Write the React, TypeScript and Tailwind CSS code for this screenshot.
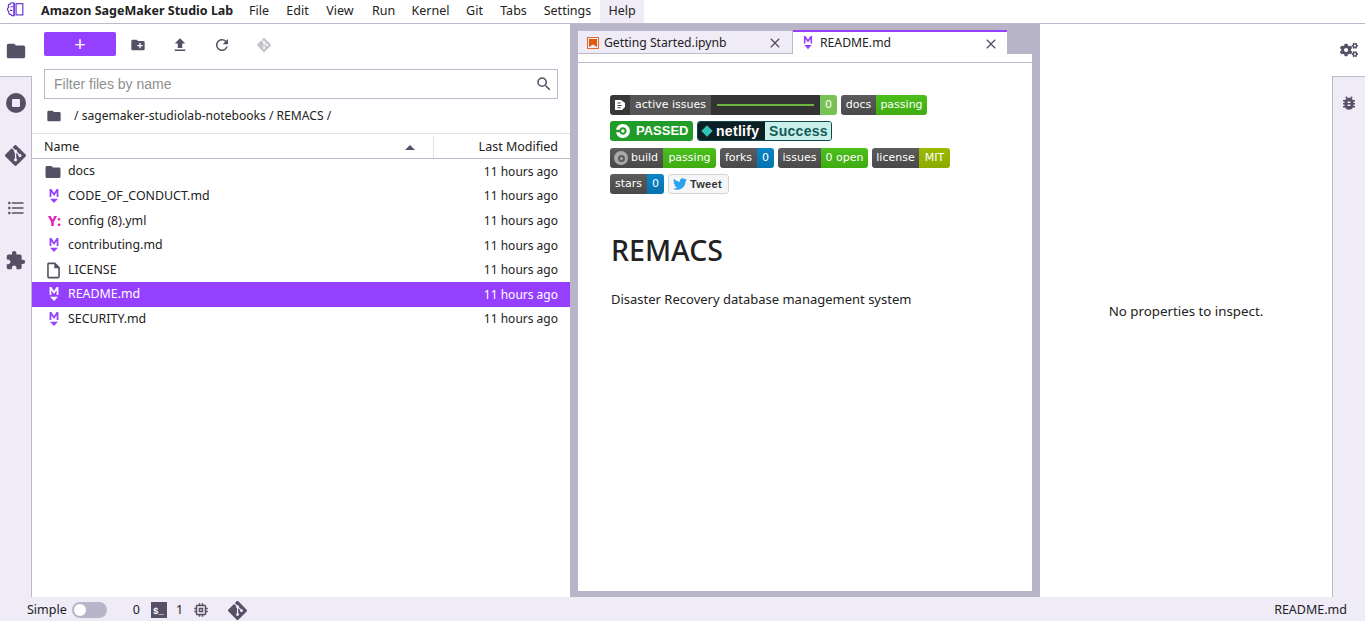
import { FaCogs, FaTwitter } from 'react-icons/fa';
import {
  MdBugReport,
  MdClose,
  MdCreateNewFolder,
  MdExtension,
  MdFileUpload,
  MdFolder,
  MdFormatListBulleted,
  MdMemory,
  MdOutlineInsertDriveFile,
  MdRefresh,
  MdSearch,
} from 'react-icons/md';
import { SiCircleci, SiGit } from 'react-icons/si';

const menus = [
  { label: 'File', width: 'w-[38px]' },
  { label: 'Edit', width: 'w-[39px]' },
  { label: 'View', width: 'w-[46px]' },
  { label: 'Run', width: 'w-[41px]' },
  { label: 'Kernel', width: 'w-[53px]' },
  { label: 'Git', width: 'w-[35px]' },
  { label: 'Tabs', width: 'w-[43px]' },
  { label: 'Settings', width: 'w-[65px]' },
  { label: 'Help', width: 'w-[44px]' },
];

type FileKind = 'folder' | 'md' | 'yml' | 'file';

const files: { name: string; kind: FileKind }[] = [
  { name: 'docs', kind: 'folder' },
  { name: 'CODE_OF_CONDUCT.md', kind: 'md' },
  { name: 'config (8).yml', kind: 'yml' },
  { name: 'contributing.md', kind: 'md' },
  { name: 'LICENSE', kind: 'file' },
  { name: 'README.md', kind: 'md' },
  { name: 'SECURITY.md', kind: 'md' },
];

const green = 'bg-gradient-to-b from-[#4bbf1b] to-[#40ab12]';
const blue = 'bg-gradient-to-b from-[#0a85c9] to-[#0672ad]';

function MarkdownIcon({ className }: { className?: string }) {
  return (
    <svg viewBox="0 0 11 17" className={className} fill="currentColor">
      <path d="M.5 0h2l3 4.5 3-4.5h2v9h-2V3.7l-3 4.3-3-4.3V9h-2z" />
      <path d="M1 11h9l-4.5 5z" />
    </svg>
  );
}

function Logo() {
  return (
    <svg viewBox="0 0 20 18" className="h-[17px] w-[18px] text-[#5b21d6]" fill="none" stroke="currentColor" strokeWidth="1.2">
      <path d="M9 2.5C7.5 .8 5 1.2 4.6 3 2.6 3 2 5.2 3 6.5 1.2 7.6 1.2 10 3 11c-.6 2 .8 3.6 2.4 3.4.6 1.8 2.6 2.2 3.6 1z" />
      <path d="M5 6h2.5M4.5 10H7M9 1.5v15" />
      <rect x="11.2" y="2.5" width="7.5" height="12.5" />
    </svg>
  );
}

function Badge({ left, right, color, leftW, rightW }: { left: string; right: string; color: string; leftW: string; rightW: string }) {
  return (
    <span className="flex h-5 overflow-hidden rounded-[3px] font-['DejaVu_Sans',sans-serif] text-[11px] leading-5 text-white">
      <span className={`bg-gradient-to-b from-[#5c5c5c] to-[#494949] text-center ${leftW}`}>{left}</span>
      <span className={`text-center ${color} ${rightW}`}>{right}</span>
    </span>
  );
}

function FileRow({ name, kind, active }: { name: string; kind: FileKind; active: boolean }) {
  return (
    <div className={`flex h-[24.6px] items-center pl-[12px] pr-3 pt-[1px] text-[12.4px] ${active ? 'bg-[#9640ff] text-white' : 'text-[#222]'}`}>
      <span className="flex w-[24px] items-center">
        {kind === 'folder' && <MdFolder size={18} className="text-[#555066]" />}
        {kind === 'md' && <MarkdownIcon className={`ml-[5px] h-[15px] w-[10px] ${active ? 'text-white' : 'text-[#9640ff]'}`} />}
        {kind === 'yml' && <span className="ml-[4px] text-[14px] leading-none font-extrabold text-[#e01bc0]">Y:</span>}
        {kind === 'file' && <MdOutlineInsertDriveFile size={19} className="text-[#555066]" />}
      </span>
      <span className="flex-1 truncate">{name}</span>
      <span className="text-right text-[12px]">11 hours ago</span>
    </div>
  );
}

export default function App() {
  return (
    <div className="flex h-[621px] w-[1365px] flex-col overflow-hidden bg-white font-['Noto_Sans',sans-serif] text-[12.5px] text-[#222]">
      {/* top menu */}
      <div className="flex h-6 items-stretch border-b border-[#bdb9cb]">
        <div className="flex w-[41px] items-center pb-1 pl-[6px]">
          <Logo />
        </div>
        <div className="flex w-[199px] items-center font-bold text-[#222]">Amazon SageMaker Studio Lab</div>
        {menus.map((m) => (
          <div key={m.label} className={`flex items-center justify-center ${m.width} ${m.label === 'Help' ? 'bg-[#efebf7]' : ''}`}>
            {m.label}
          </div>
        ))}
      </div>

      <div className="flex min-h-0 flex-1">
        {/* left rail */}
        <div className="flex w-8 flex-col text-[#555066]">
          <div className="flex h-[52px] items-center justify-center pt-[1px]">
            <MdFolder size={22} />
          </div>
          <div className="flex flex-1 flex-col items-center border-t border-r border-[#bdb9cb] bg-[#efebf7] pt-[16px]">
            <span className="flex h-[20px] w-[20px] items-center justify-center rounded-full bg-[#555066]">
              <span className="h-2 w-2 rounded-[1px] bg-[#efebf7]" />
            </span>
            <SiGit size={21} className="mt-[32px]" />
            <MdFormatListBulleted size={20} className="mt-[32px]" />
            <MdExtension size={21} className="mt-[32px]" />
          </div>
        </div>

        {/* file browser */}
        <div className="flex w-[538px] flex-col">
          <div className="flex items-center pl-3 pt-2">
            <button className="flex h-6 w-[72px] items-center justify-center rounded-[2px] bg-[#9640ff] text-xl leading-none text-white">+</button>
            <MdCreateNewFolder size={16} className="ml-[14px] mt-[2px] text-[#555066]" />
            <MdFileUpload size={18} className="ml-[25px] mt-[2px] text-[#555066]" />
            <MdRefresh size={18} className="ml-[24px] mt-[2px] text-[#555066]" />
            <SiGit size={14} className="ml-[26px] mt-[2px] text-[#c4c2c9]" />
          </div>
          <div className="mx-3 mt-[13px] flex h-[30px] items-center justify-between border border-[#bdb9cb] pl-[9px] pr-[4px] text-[14px] text-[#8f8f8f]">
            <span className="font-['Liberation_Sans',sans-serif]">Filter files by name</span>
            <MdSearch size={18} className="text-[#555066]" />
          </div>
          <div className="flex h-[34px] items-center pl-[14px] text-[12.1px]">
            <MdFolder size={16} className="mr-[12px] text-[#555066]" />
            <span>/ sagemaker-studiolab-notebooks / REMACS /</span>
          </div>
          <div className="flex h-[26px] items-stretch border-t border-b border-t-[#e3e0ec] border-b-[#bdb9cb] pt-[2px]">
            <div className="flex w-[402px] items-center justify-between border-r border-[#e3e0ec] pl-3 pr-[18px]">
              <span>Name</span>
              <span className="h-0 w-0 border-x-[5px] border-b-[5px] border-x-transparent border-b-[#555066]" />
            </div>
            <div className="flex flex-1 items-center justify-end pr-3">Last Modified</div>
          </div>
          <div>
            {files.map((f) => (
              <FileRow key={f.name} name={f.name} kind={f.kind} active={f.name === 'README.md'} />
            ))}
          </div>
        </div>

        {/* dock */}
        <div className="flex w-[470px] flex-col bg-[#b9b5c9] px-2 pb-[6px]">
          <div className="mt-[6px] flex h-6 items-stretch text-[12.2px]">
            <div className="flex w-[215px] items-center justify-between border-r border-t border-b border-[#bdb9cb] bg-[#efebf7] pl-[9px] pr-[9px] pt-[2px]">
              <span className="flex items-center gap-[5px]">
                <span className="flex h-3 w-3 items-center justify-center border border-[#e06a2b]">
                  <svg viewBox="0 0 8 8" className="h-2 w-2 text-[#e0590f]" fill="currentColor">
                    <path d="M0 0h8v8L4 5.5 0 8z" />
                  </svg>
                </span>
                Getting Started.ipynb
              </span>
              <MdClose size={16} className="text-[#555066]" />
            </div>
            <div className="flex w-[214px] items-center justify-between border-t-2 border-[#9640ff] bg-white pl-[10px] pr-[8px] pt-[1px]">
              <span className="flex items-center gap-[7px]">
                <MarkdownIcon className="h-[14px] w-[10px] text-[#9640ff]" />
                README.md
              </span>
              <MdClose size={16} className="text-[#555066]" />
            </div>
          </div>
          <div className="w-[454px] flex-1 bg-white">
            <div className="h-[9px] border-b border-[#bdb9cb]" />
            <div className="pl-[32px] pt-[32px]">
              <div className="flex gap-[4px]">
                <span className="flex h-5 overflow-hidden rounded-[3px] font-['DejaVu_Sans',sans-serif] text-[11px] leading-5 text-white">
                  <span className="flex w-[20px] items-center justify-center bg-[#383838]">
                    <svg viewBox="0 0 12 12" className="h-3 w-3" fill="white">
                      <path fillRule="evenodd" d="M1 1h6l4 3v4l-3 3H1zM3.5 3.5v1h3v-1zm0 2.5v1h4V6zm0 2.2v1h3v-1z" />
                    </svg>
                  </span>
                  <span className="w-[81px] bg-[#555] text-center">active issues</span>
                  <span className="flex w-[109px] items-center bg-[#333] px-[6px]">
                    <span className="h-[2px] w-full bg-[#6cb640]" />
                  </span>
                  <span className="w-[17px] bg-[#76c255] text-center">0</span>
                </span>
                <Badge left="docs" right="passing" color={green} leftW="w-[35px]" rightW="w-[51px]" />
              </div>
              <div className="mt-[6px] flex gap-[4px]">
                <span className="flex h-5 w-[83px] items-center gap-[6px] rounded-[3px] bg-[#229c28] pl-[6px] font-['Liberation_Sans',sans-serif] text-[13px] font-bold text-white">
                  <SiCircleci size={14} />
                  PASSED
                </span>
                <span className="flex h-5 overflow-hidden rounded-[3px] border border-[#0e4a4a] font-['Liberation_Sans',sans-serif] text-[14px] leading-[18px] font-bold">
                  <span className="flex w-[67px] items-center gap-[5px] bg-[#0e1e25] pl-[5px] tracking-[.3px] text-white">
                    <span className="h-[8px] w-[8px] rotate-45 bg-[#2fc4b6]" />
                    netlify
                  </span>
                  <span className="w-[66px] bg-[#c9efea] pl-[4px] tracking-[.3px] text-[#115c58]">Success</span>
                </span>
              </div>
              <div className="mt-[7px] flex gap-[4px]">
                <span className="flex h-5 overflow-hidden rounded-[3px] font-['DejaVu_Sans',sans-serif] text-[11px] leading-5 text-white">
                  <span className="flex w-[53px] items-center gap-[3px] bg-gradient-to-b from-[#5c5c5c] to-[#494949] pl-[4px]">
                    <span className="flex h-[14px] w-[14px] items-center justify-center rounded-full bg-[#a9a9a9]">
                      <span className="h-[7px] w-[7px] rounded-full border-2 border-[#5c5c5c]" />
                    </span>
                    build
                  </span>
                  <span className={`w-[53px] text-center ${green}`}>passing</span>
                </span>
                <Badge left="forks" right="0" color={blue} leftW="w-[37px]" rightW="w-[17px]" />
                <Badge left="issues" right="0 open" color={green} leftW="w-[43px]" rightW="w-[47px]" />
                <Badge left="license" right="MIT" color="bg-gradient-to-b from-[#9cba00] to-[#8cab00]" leftW="w-[47px]" rightW="w-[31px]" />
              </div>
              <div className="mt-[6px] flex gap-[4px]">
                <Badge left="stars" right="0" color={blue} leftW="w-[37px]" rightW="w-[17px]" />
                <span className="flex h-5 w-[61px] items-center gap-[3px] rounded-[3px] border border-[#d5d5d5] bg-[#f6f6f6] pl-[4px] font-['Liberation_Sans',sans-serif] text-[11px] tracking-[.3px] font-bold text-[#333]">
                  <FaTwitter size={14} className="text-[#2aa3ef]" />
                  Tweet
                </span>
              </div>
              <h1 className="mt-[34px] pl-[1px] text-[28.5px] leading-[44px] font-medium text-[#222]">REMACS</h1>
              <p className="mt-[18px] pl-[1px] text-[13px]">Disaster Recovery database management system</p>
            </div>
          </div>
        </div>

        {/* inspector */}
        <div className="flex w-[292px] items-center justify-center pt-[2px] text-[13.3px]">No properties to inspect.</div>

        {/* right rail */}
        <div className="flex w-[33px] flex-col text-[#555066]">
          <div className="flex h-[52px] items-center justify-center">
            <FaCogs size={18} />
          </div>
          <div className="flex flex-1 justify-center border-l border-t border-[#bdb9cb] bg-[#efebf7] pt-[17px]">
            <MdBugReport size={18} />
          </div>
        </div>
      </div>

      {/* status bar */}
      <div className="flex h-6 items-center bg-[#efebf7] pl-[27px] pr-[18px] pt-[2px]">
        <span>Simple</span>
        <span className="ml-[5px] flex h-[16px] w-[35px] items-center rounded-full bg-[#b9b5c9] pl-[2px]">
          <span className="h-3 w-3 rounded-full bg-white" />
        </span>
        <span className="ml-[26px]">0</span>
        <span className="ml-[11px] flex h-[16px] w-[16px] items-end bg-[#555066] pb-[1px] pl-[2px] font-['Liberation_Mono',monospace] text-[9px] leading-none font-bold text-white">$_</span>
        <span className="ml-[9px]">1</span>
        <MdMemory size={18} className="ml-[9px] text-[#555066]" />
        <SiGit size={19} className="ml-[18px] text-[#555066]" />
        <span className="ml-auto">README.md</span>
      </div>
    </div>
  );
}
